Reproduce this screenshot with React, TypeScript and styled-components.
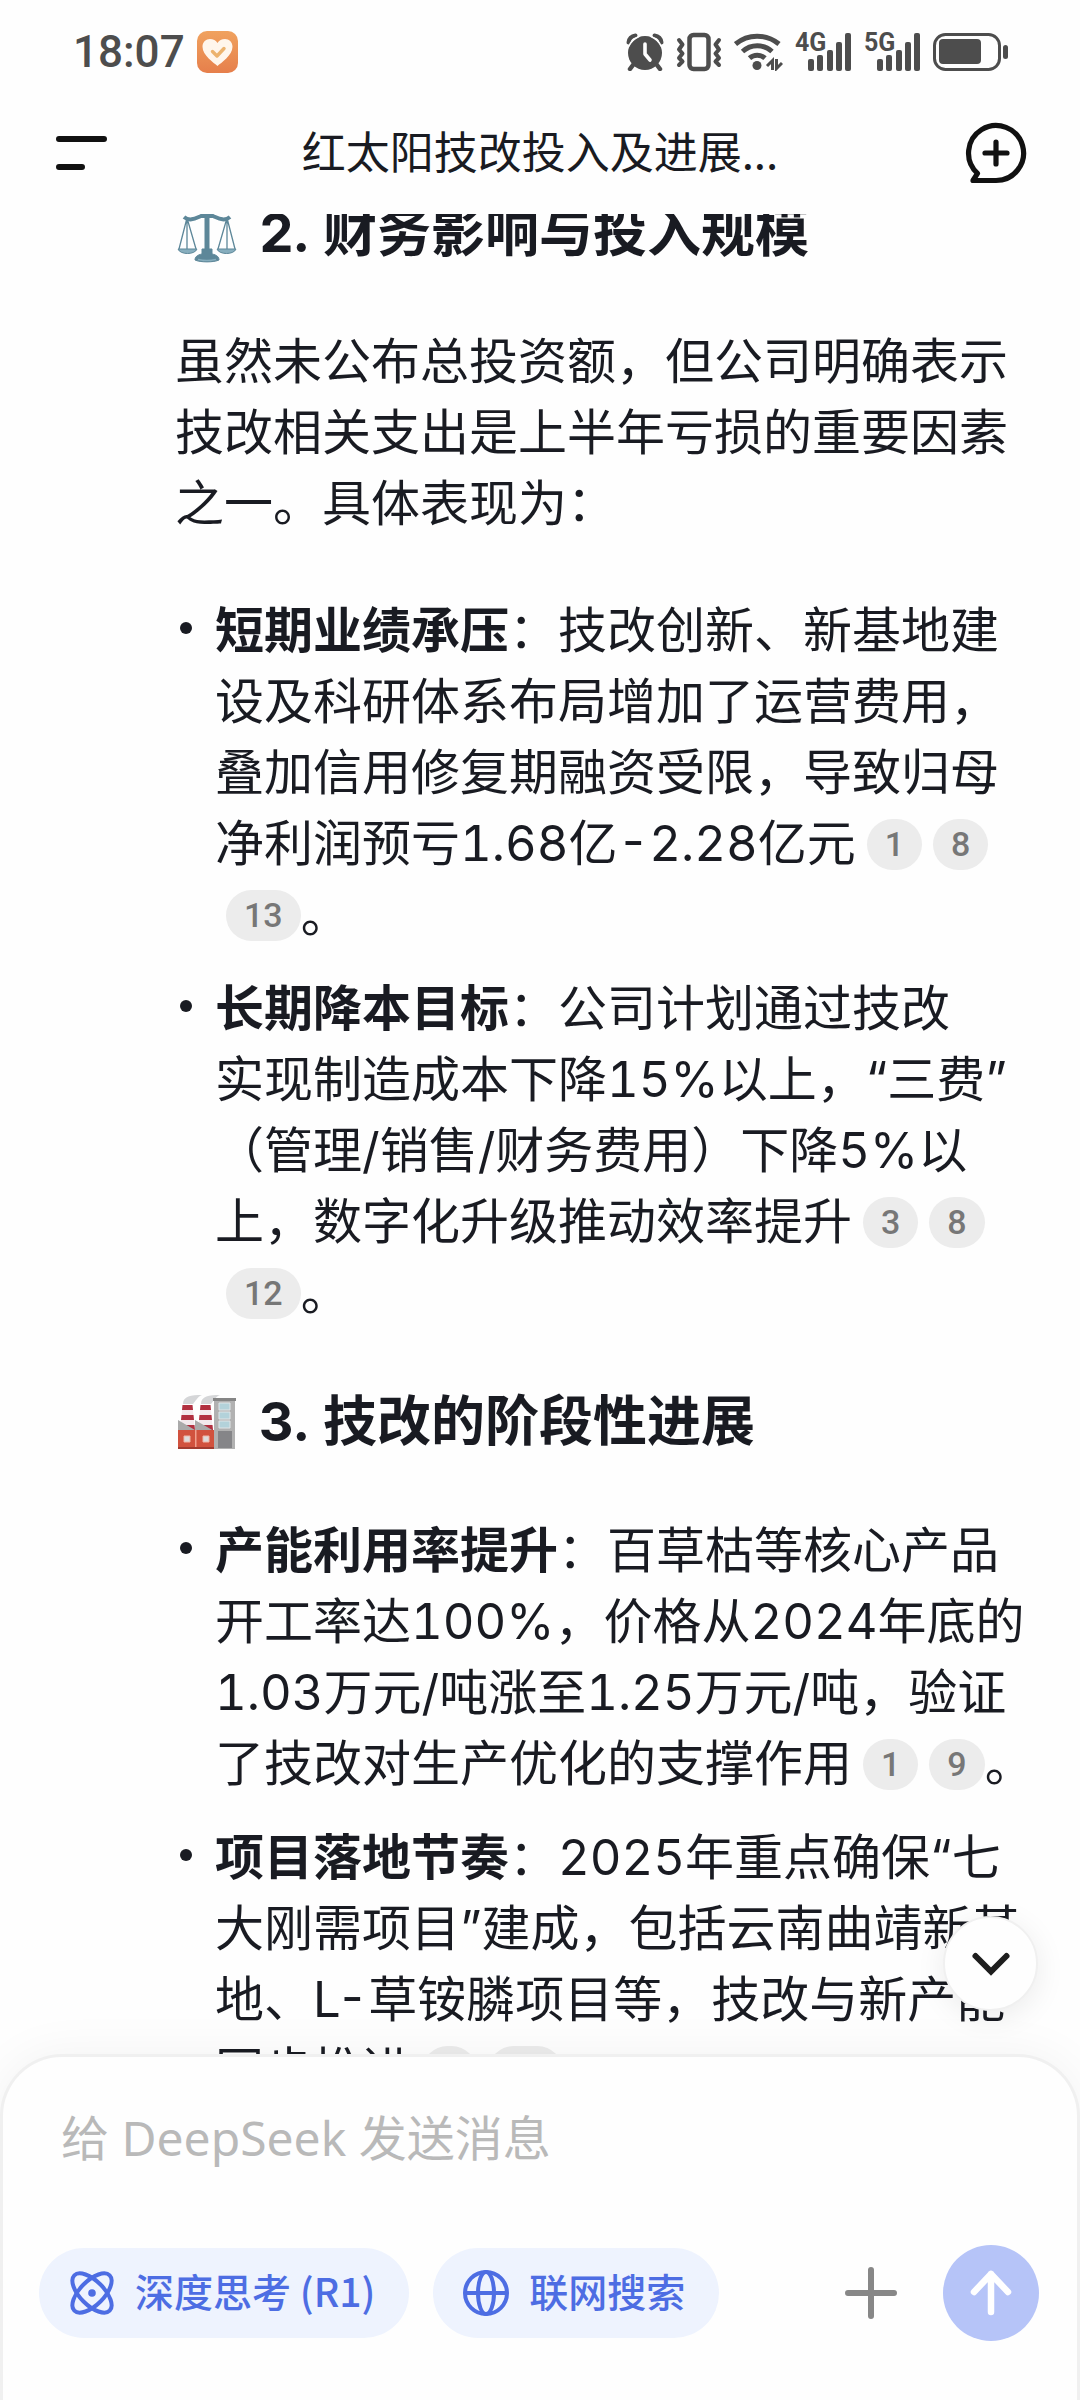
import React from 'react';
import styled, { createGlobalStyle } from 'styled-components';

const INK = '#191b22';
const STATUS = '#4d4d4d';
const BLUE = '#4d6de3';
const CJK = '"Noto Sans CJK SC", sans-serif';

const GlobalStyle = createGlobalStyle`
  *, *::before, *::after { box-sizing: border-box; }
  body { margin: 0; background: #fefefe; }
  button { border: 0; padding: 0; background: none; font: inherit; color: inherit; cursor: pointer; }
  svg { display: block; flex: none; }
`;

const Screen = styled.div`
  display: flex;
  flex-direction: column;
  height: 100vh;
  overflow: hidden;
  background: #fefefe;
  color: ${INK};
  font-family: Inter, ${CJK};
`;

const StatusBar = styled.div`
  display: flex;
  align-items: center;
  justify-content: space-between;
  flex: none;
  height: 103px;
  padding: 0 71px 0 73px;
  color: ${STATUS};
`;

const StatusGroup = styled.div`
  display: flex;
  align-items: center;
  gap: 12px;
`;

const Clock = styled.time`
  font: 500 44px/52px Roboto, sans-serif;
`;

const Signal = styled.div`
  position: relative;
  width: 57px;
  height: 38px;
`;

const Network = styled.span`
  position: absolute;
  top: -3px;
  left: 0;
  font: 700 25px/25px "Liberation Sans Narrow", Roboto, sans-serif;
`;

const Header = styled.header`
  display: flex;
  align-items: center;
  justify-content: space-between;
  flex: none;
  height: 111px;
  padding: 0 52px 12px;
`;

const IconButton = styled.button`
  display: grid;
  place-items: center;
  width: 64px;
  height: 64px;
`;

const Title = styled.h1`
  margin: 0;
  padding-bottom: 6px;
  font: 400 44px/60px ${CJK};
`;

const Conversation = styled.main`
  position: relative;
  flex: 1;
  min-height: 0;
`;

const Scroller = styled.div`
  height: 100%;
  overflow: hidden;
`;

const Answer = styled.article`
  margin-top: -17px;
  padding: 0 44px 0 175px;
  font-size: 49px;
  line-height: 71px;
  font-variant-numeric: tabular-nums;
`;

const Heading = styled.h2`
  display: flex;
  align-items: center;
  gap: 22px;
  margin: 58px 0;
  padding-left: 2px;
  font-size: 54px;
  line-height: 71px;
  font-weight: 700;

  &:first-child { margin-top: 0; }
`;

const Paragraph = styled.p`
  margin: 0 0 56px;
`;

const List = styled.ul`
  display: grid;
  gap: 23px;
  margin: 0;
  padding: 0;
  list-style: none;
`;

const Item = styled.li`
  display: grid;
  grid-template-columns: 40px 1fr;

  &::before {
    content: '';
    width: 12px;
    height: 12px;
    margin: 27px 0 0 5px;
    border-radius: 50%;
    background: ${INK};
  }
`;

const ItemText = styled.div`
  white-space: nowrap;
`;

const Citation = styled.a`
  display: inline-flex;
  align-items: center;
  justify-content: center;
  min-width: 54px;
  height: 51px;
  margin: 0 0 6px 11px;
  padding: 0 18px;
  border-radius: 26px;
  background: #ececec;
  color: #777;
  font: 500 34px/51px Roboto, sans-serif;
  text-decoration: none;
  vertical-align: middle;
`;

const ScrollDown = styled.button`
  position: absolute;
  right: 42px;
  bottom: 43px;
  display: grid;
  place-items: center;
  width: 95px;
  height: 95px;
  border: 2px solid #f0f0f0;
  border-radius: 50%;
  background: #fefefe;
  box-shadow: 0 6px 30px rgba(0, 0, 0, 0.08);
`;

const Composer = styled.form`
  position: relative;
  flex: none;
  padding: 46px 38px 59px 36px;
  border: 3px solid #f0f0f0;
  border-bottom: 0;
  border-radius: 62px 62px 0 0;
  background: #fefefe;
  box-shadow: 0 0 50px rgba(0, 0, 0, 0.05);
`;

const MessageInput = styled.input`
  display: block;
  width: 100%;
  height: 72px;
  margin-bottom: 70px;
  padding: 0 22px 4px;
  border: 0;
  outline: 0;
  background: transparent;
  color: ${INK};
  font: 400 48px/68px "Noto Sans", ${CJK};

  &::placeholder { color: #b9b9b9; opacity: 1; }
`;

const Tools = styled.div`
  display: flex;
  align-items: center;
`;

const Chip = styled.button`
  display: flex;
  align-items: center;
  gap: 20px;
  height: 90px;
  margin-right: 24px;
  padding: 0 34px 0 30px;
  border-radius: 45px;
  background: #eef3fe;
  color: ${BLUE};
  font: 500 39px/56px ${CJK};
`;

const ChipLabel = styled.span`
  padding-bottom: 6px;
`;

const AddButton = styled(IconButton)`
  margin: 0 40px 0 auto;
`;

const SendButton = styled.button`
  display: grid;
  place-items: center;
  width: 96px;
  height: 96px;
  border-radius: 50%;
  background: #b6c4f8;
`;

const ReminderIcon = () => (
  <svg width="41" height="42" viewBox="0 0 41 42">
    <defs>
      <linearGradient id="badge" x1="0" y1="0" x2="0" y2="1">
        <stop offset="0" stopColor="#f0a25f" />
        <stop offset="1" stopColor="#e67f4b" />
      </linearGradient>
    </defs>
    <rect width="41" height="42" rx="10" fill="url(#badge)" />
    <path d="M20.500 35C17 32 5.500 24.500 5.500 15.800C5.500 11 9 8 13 8c3.200 0 6 1.500 7.500 4C22 9.500 24.800 8 28 8c4 0 7.500 3 7.500 7.800C35.500 24.500 24 32 20.500 35Z" fill="#fff6ec" />
    <path d="M15.500 20.500l4.500 4.500 7-7.500" fill="none" stroke="#ecb36e" strokeWidth="3.400" strokeLinecap="round" strokeLinejoin="round" />
  </svg>
);

const AlarmIcon = () => (
  <svg width="38" height="38" viewBox="0 0 38 38" fill="none" stroke={STATUS} strokeLinecap="round">
    <circle cx="19" cy="20" r="17" fill={STATUS} stroke="none" />
    <path d="M2.500 9.500C3 5.500 6 3 9.500 2.500M35.500 9.500C35 5.500 32 3 28.500 2.500" strokeWidth="4" />
    <path d="M3 13C5 8.500 8.500 5.500 13 3.500M35 13C33 8.500 29.500 5.500 25 3.500" stroke="#fefefe" strokeWidth="1.500" />
    <path d="M7 32l-3 4M31 32l3 4" strokeWidth="4.500" />
    <path d="M19 11v10l5 6" stroke="#fefefe" strokeWidth="3.600" strokeLinejoin="round" />
  </svg>
);

const VibrateIcon = () => (
  <svg width="46" height="40" viewBox="0 0 46 40" fill="none" stroke={STATUS} strokeWidth="4.500" strokeLinejoin="round" strokeLinecap="round">
    <rect x="13.500" y="3" width="19" height="34" rx="4" />
    <path d="M3 8l3.500 4.500L3 17.500l3.500 4L3 26l3.500 3.500L3 33" strokeWidth="4" />
    <path d="M43 8l-3.500 4.500 3.500 5-3.500 4L43 26l-3.500 3.500L43 33" strokeWidth="4" />
  </svg>
);

const WifiIcon = () => (
  <svg width="49" height="38" viewBox="0 0 49 38" fill="none" stroke={STATUS} strokeWidth="5">
    <path d="M1.500 11C14 .5 32 .5 45 11" />
    <path d="M8.500 18.500C17 10.800 29.500 10.800 38 18.500" />
    <path d="M15.500 25.200c4.500-4 11-4 15.500 0" />
    <circle cx="23" cy="32.500" r="4.500" fill={STATUS} stroke="none" />
    <path d="M38.500 37V27.500l-5.500 5.500M42.500 26v9.500l5.500-5.500" strokeWidth="3" />
  </svg>
);

const SignalBars = () => (
  <svg width="57" height="38" viewBox="0 0 57 38" fill={STATUS}>
    <rect x="13" y="26" width="6" height="12" rx="2" />
    <rect x="22" y="22" width="6" height="16" rx="2" />
    <rect x="32" y="17" width="6" height="21" rx="2" />
    <rect x="41" y="9" width="6" height="29" rx="2" />
    <rect x="50" y="0" width="6" height="38" rx="2" />
  </svg>
);

const BatteryIcon = () => (
  <svg width="76" height="38" viewBox="0 0 76 38">
    <rect x="1.500" y="1.500" width="65" height="35" rx="11" fill="none" stroke={STATUS} strokeWidth="3" />
    <rect x="6" y="6" width="42" height="25" rx="4" fill={STATUS} />
    <rect x="70" y="12" width="5" height="14" rx="2.500" fill={STATUS} />
  </svg>
);

const MenuIcon = () => (
  <svg width="56" height="40" viewBox="0 0 56 40" stroke="#111" strokeWidth="6" strokeLinecap="round">
    <path d="M3 6h45M3 34h23" />
  </svg>
);

const NewChatIcon = () => (
  <svg width="62" height="62" viewBox="0 0 62 62" fill="none" stroke="#111" strokeWidth="5.200" strokeLinecap="round" strokeLinejoin="round">
    <path d="M31 58.500H8l4.500-7.200A27.500 27.500 0 1 1 31 58.500Z" />
    <path d="M31 20v22M20 31h22" />
  </svg>
);

const ScalesIcon = () => (
  <svg width="60" height="60" viewBox="0 0 60 60" fill="none" stroke="#5d8799">
    <path d="M7 14c6 5 12 1 17-1h12c5 2 11 6 17 1" strokeWidth="4" />
    <circle cx="30" cy="9" r="5" fill="#5d8799" />
    <path d="M30 12v36" strokeWidth="5" />
    <path d="M10 15L2 46M10 15v31M10 15l9 31M50 15l-9 31M50 15v31M50 15l8 31" strokeWidth="1.300" />
    <path d="M1 46h19c-2 6-17 6-19 0ZM40 46h19c-2 6-17 6-19 0Z" fill="#87aebe" strokeWidth="1" />
    <path d="M25 46h10v5c5 1 7 3 7 6-5 2.500-19 2.500-24 0 0-3 2-5 7-6Z" fill="#5d8799" strokeWidth="1" />
    <path d="M21 56.500c5 1 13 1 18 0" stroke="#87aebe" strokeWidth="1.500" />
  </svg>
);

const Chimney = ({ x }: { x: number }) => (
  <g transform={`translate(${x} 0)`}>
    <path d="M2 10C2 2 10 1 21 1c-5 2-6 6-9 9Z" fill="#d5d6d8" />
    <path d="M1.500 11h10L14 38H-1Z" fill="#f3e9ec" />
    <path d="M1.500 11h10l.5 5H1ZM.5 21H12.500l.5 5H0ZM-.5 31h14l.5 5H-1Z" fill="#b23040" />
  </g>
);

const FactoryIcon = () => (
  <svg width="60" height="56" viewBox="0 0 60 56">
    <Chimney x={4} />
    <Chimney x={22} />
    <path d="M37 5h21v50H37Z" fill="#b1b1b1" />
    <path d="M36 4h23v3H36Z" fill="#858585" />
    <path d="M42 9h11v7H42ZM42 18h11v7H42ZM42 27h11v7H42Z" fill="#b3d2da" stroke="#e0e5e7" strokeWidth="1" />
    <path d="M41 37h14v17H41Z" fill="#858588" />
    <path d="M1 26l17 10V26l19 11v1H1Z" fill="#aaa" />
    <path d="M1 36h36v19H1Z" fill="#d1523e" />
    <path d="M18 36h1.500v17H18Z" fill="#f0a08e" />
    <path d="M1 53h36v2H1Z" fill="#a23b2f" />
    <path d="M7 42h6v6H7ZM26 42h6v6h-6Z" fill="#dcdcdc" stroke="#f1b5a6" strokeWidth="1" />
  </svg>
);

const ChevronIcon = () => (
  <svg width="40" height="28" viewBox="0 0 40 28" fill="none" stroke="#1e1e1e" strokeWidth="6" strokeLinecap="round" strokeLinejoin="miter">
    <path d="M4.500 6L20 21.500 35.500 6" />
  </svg>
);

const AtomIcon = () => (
  <svg width="46" height="46" viewBox="0 0 46 46" fill="none" stroke={BLUE} strokeWidth="4">
    <ellipse cx="23" cy="23" rx="25" ry="12" transform="rotate(45 23 23)" />
    <ellipse cx="23" cy="23" rx="25" ry="12" transform="rotate(-45 23 23)" />
    <circle cx="23" cy="23" r="3.800" fill={BLUE} stroke="none" />
  </svg>
);

const GlobeIcon = () => (
  <svg width="46" height="46" viewBox="0 0 46 46" fill="none" stroke={BLUE} strokeWidth="4">
    <circle cx="23" cy="23" r="21" />
    <ellipse cx="23" cy="23" rx="8" ry="21" />
    <path d="M2 23h42" />
  </svg>
);

const PlusIcon = () => (
  <svg width="52" height="52" viewBox="0 0 52 52" stroke="#878787" strokeWidth="6" strokeLinecap="round">
    <path d="M26 3v46M3 26h46" />
  </svg>
);

const SendIcon = () => (
  <svg width="44" height="48" viewBox="0 0 44 48" fill="none" stroke="#fff" strokeWidth="6.500" strokeLinecap="round" strokeLinejoin="round">
    <path d="M22 5v38M5 23L22 5l17 18" />
  </svg>
);

type Point = { term: string; lines: string[]; cites: number[][]; end?: string };

const Points = ({ points }: { points: Point[] }) => (
  <List>
    {points.map((point) => (
      <Item key={point.term}>
        <ItemText>
          <strong>{point.term}</strong>
          {point.lines.map((line, i) => (
            <React.Fragment key={line}>
              {i > 0 && <br />}
              {line}
            </React.Fragment>
          ))}
          {point.cites.map((row, i) => (
            <React.Fragment key={i}>
              {i > 0 && <br />}
              {row.map((n) => (
                <Citation key={n} href={`#source-${n}`}>{n}</Citation>
              ))}
            </React.Fragment>
          ))}
          {point.end}
        </ItemText>
      </Item>
    ))}
  </List>
);

const IMPACT: Point[] = [
  {
    term: '短期业绩承压',
    lines: ['：技改创新、新基地建', '设及科研体系布局增加了运营费用，', '叠加信用修复期融资受限，导致归母', '净利润预亏1.68亿-2.28亿元'],
    cites: [[1, 8], [13]],
    end: '。',
  },
  {
    term: '长期降本目标',
    lines: ['：公司计划通过技改', '实现制造成本下降15%以上，“三费”', '（管理/销售/财务费用）下降5%以', '上，数字化升级推动效率提升'],
    cites: [[3, 8], [12]],
    end: '。',
  },
];

const PROGRESS: Point[] = [
  {
    term: '产能利用率提升',
    lines: ['：百草枯等核心产品', '开工率达100%，价格从2024年底的', '1.03万元/吨涨至1.25万元/吨，验证', '了技改对生产优化的支撑作用'],
    cites: [[1, 9]],
    end: '。',
  },
  {
    term: '项目落地节奏',
    lines: ['：2025年重点确保“七', '大刚需项目”建成，包括云南曲靖新基', '地、L-草铵膦项目等，技改与新产能', '同步推进'],
    cites: [[1, 13]],
  },
];

export default function App() {
  return (
    <Screen lang="zh-CN">
      <GlobalStyle />
      <StatusBar>
        <StatusGroup>
          <Clock>18:07</Clock>
          <ReminderIcon />
        </StatusGroup>
        <StatusGroup>
          <AlarmIcon />
          <VibrateIcon />
          <WifiIcon />
          <Signal><SignalBars /><Network>4G</Network></Signal>
          <Signal><SignalBars /><Network>5G</Network></Signal>
          <BatteryIcon />
        </StatusGroup>
      </StatusBar>
      <Header>
        <IconButton type="button" aria-label="菜单"><MenuIcon /></IconButton>
        <Title>红太阳技改投入及进展...</Title>
        <IconButton type="button" aria-label="新对话"><NewChatIcon /></IconButton>
      </Header>
      <Conversation>
        <Scroller>
          <Answer>
            <Heading><ScalesIcon />2. 财务影响与投入规模</Heading>
            <Paragraph>虽然未公布总投资额，但公司明确表示技改相关支出是上半年亏损的重要因素之一。具体表现为：</Paragraph>
            <Points points={IMPACT} />
            <Heading><FactoryIcon />3. 技改的阶段性进展</Heading>
            <Points points={PROGRESS} />
          </Answer>
        </Scroller>
        <ScrollDown type="button" aria-label="滚动到底部"><ChevronIcon /></ScrollDown>
      </Conversation>
      <Composer onSubmit={(e) => e.preventDefault()}>
        <MessageInput type="text" aria-label="消息" placeholder="给 DeepSeek 发送消息" />
        <Tools>
          <Chip type="button" aria-pressed="true"><AtomIcon /><ChipLabel>深度思考 (R1)</ChipLabel></Chip>
          <Chip type="button" aria-pressed="true"><GlobeIcon /><ChipLabel>联网搜索</ChipLabel></Chip>
          <AddButton type="button" aria-label="添加"><PlusIcon /></AddButton>
          <SendButton type="submit" aria-label="发送"><SendIcon /></SendButton>
        </Tools>
      </Composer>
    </Screen>
  );
}
